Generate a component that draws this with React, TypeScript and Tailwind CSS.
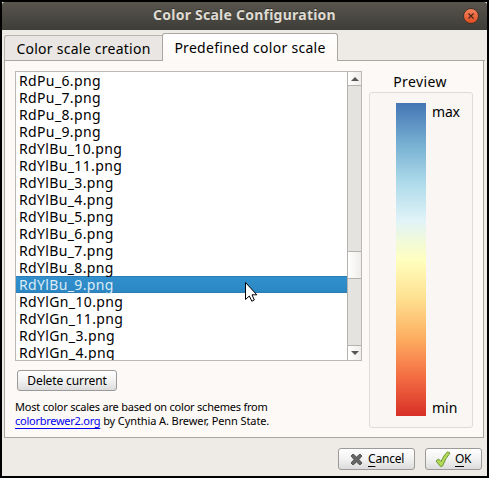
import type { ReactNode } from "react";

const files = [
  "RdPu_6.png", "RdPu_7.png", "RdPu_8.png", "RdPu_9.png", "RdYlBu_10.png", "RdYlBu_11.png",
  "RdYlBu_3.png", "RdYlBu_4.png", "RdYlBu_5.png", "RdYlBu_6.png", "RdYlBu_7.png", "RdYlBu_8.png",
  "RdYlBu_9.png", "RdYlGn_10.png", "RdYlGn_11.png", "RdYlGn_3.png", "RdYlGn_4.png",
];
const selected = "RdYlBu_9.png";

function TitleBar() {
  return (
    <header className="flex h-7 shrink-0 items-center rounded-t-[3px] bg-linear-to-b from-[#58554d] to-[#3e3d38] pr-2 pl-6">
      <h1 className="-mt-0.5 flex-1 text-center text-[14px] leading-5 font-bold tracking-[0.24px] whitespace-nowrap text-[#dfdbd2] [text-shadow:0_-1px_#33322e]">
        Color Scale Configuration
      </h1>
      <button aria-label="Close" className="flex size-4 items-center justify-center rounded-full border border-[#45352b] bg-linear-to-b from-[#f5835d] to-[#df4c1d]">
        <svg width="6" height="6" viewBox="0 0 6 6" stroke="#49271a" strokeWidth="1.2">
          <path d="M.5 .5 5.5 5.5M5.5 .5 .5 5.5" />
        </svg>
      </button>
    </header>
  );
}

function FileList() {
  return (
    <div className="flex h-[290px] w-[347px] overflow-hidden border border-[#bcb9b5] bg-white">
      <ul className="min-w-0 flex-1">
        {files.map((f) => (
          <li
            key={f}
            className={
              "h-[17px] pl-[3px] text-[14px] tracking-[0.36px] " +
              (f === selected
                ? "border-y border-[#2c7db4] bg-linear-to-b from-[#318fcd] to-[#2b88c4] leading-[15px] text-[#dcebf5]"
                : "leading-[17px] text-black")
            }
          >
            {f}
          </li>
        ))}
      </ul>
      <div className="flex w-[14px] flex-col border-l border-[#b5b2ae] bg-[#e4e3df]">
        <div className="flex h-[14px] items-center justify-center border-b border-[#b5b2ae] bg-linear-to-r from-white to-[#eeedea]">
          <svg width="8" height="4" viewBox="0 0 8 4"><path d="M4 0 8 4H0Z" fill="#555" /></svg>
        </div>
        <div className="mt-[165px] h-7 border-y border-[#b5b2ae] bg-linear-to-r from-white to-[#eeedea]" />
        <div className="mt-auto flex h-[15px] items-center justify-center border-t border-[#b5b2ae] bg-linear-to-r from-white to-[#eeedea]">
          <svg width="8" height="4" viewBox="0 0 8 4"><path d="M0 0H8L4 4Z" fill="#555" /></svg>
        </div>
      </div>
    </div>
  );
}

function Preview() {
  return (
    <section className="flex w-[104px] flex-col">
      <h2 className="flex h-[21px] items-center justify-center pr-[2px] text-[14px] tracking-[0.4px]">Preview</h2>
      <div className="flex h-[336px] gap-[6px] rounded-[3px] border border-[#dfdbd8] bg-[#f9f6f4] py-[10px] pl-[26px]">
        <div className="h-[313px] w-[30px] bg-[linear-gradient(to_bottom,#4575b4_0%,#74add1_12.5%,#abd9e9_25%,#e0f3f8_37.5%,#ffffbf_50%,#fee090_62.5%,#fdae61_75%,#f46d43_87.5%,#d73027_100%)]" />
        <div className="flex h-[314px] flex-col justify-between text-[14px] leading-[18px]">
          <span className="tracking-[-0.2px]">max</span>
          <span>min</span>
        </div>
      </div>
    </section>
  );
}

function Button({ className, children }: { className: string; children: ReactNode }) {
  return (
    <button className={"flex items-center rounded-[3px] border border-[#9c9a98] bg-linear-to-b from-white via-[#f2f2f2] to-[#dcdcdc] text-[12px] leading-4 tracking-[-0.12px] whitespace-nowrap " + className}>
      {children}
    </button>
  );
}

export default function App() {
  return (
    <div className="relative h-[478px] w-[489px] bg-black p-[2px] pb-0 font-['Noto_Sans',sans-serif] text-black">
      <div className="flex h-[474px] w-[485px] flex-col bg-[#eeebe7]">
        <TitleBar />
        <main className="px-[2px] pt-[3px]">
          <div className="flex h-[28px] items-end">
            <div className="mb-px flex h-[25px] w-[158px] items-center justify-center rounded-tl-[3px] border border-r-0 border-b-0 border-[#b7b3af] bg-[#e9e6e3] text-[14px] tracking-[0.26px] whitespace-nowrap">
              Color scale creation
            </div>
            <div className="flex h-[28px] w-[176px] items-center justify-center rounded-t-[3px] border border-b-0 border-[#aaa6a2] bg-linear-to-b from-white to-[#fdf9f6] text-[14px] tracking-[0.28px] whitespace-nowrap">
              Predefined color scale
            </div>
            <div className="h-px flex-1 bg-[#aaa6a2]" />
          </div>
          <div className="-mt-px flex">
            <div className="h-px w-[158px] bg-[#aaa6a2]" />
          </div>
          <div className="flex h-[377px] w-[480px] justify-between border border-t-0 border-[#aaa6a2] bg-[#fdf9f6] pt-[10px] pr-[10px] pl-[10px]">
            <div className="flex flex-col items-start">
              <FileList />
              <Button className="mt-[9px] ml-[2px] h-[21px] w-[100px] justify-center">Delete current</Button>
              <p className="mt-[9px] text-[11px] leading-[14px] tracking-[-0.22px] whitespace-nowrap">
                Most color scales are based on color schemes from
                <br />
                <a className="tracking-[-0.26px] text-[#0000ee] underline underline-offset-3">colorbrewer2.org</a>
                <span className="tracking-[-0.1px]"> by Cynthia A. Brewer, Penn State.</span>
              </p>
            </div>
            <Preview />
          </div>
        </main>
        <footer className="flex justify-end gap-[10px] pt-[10px] pr-[5px]">
          <Button className="h-[22px] w-[77px] gap-[5px] pl-[11px]">
            <svg width="13" height="13" viewBox="0 0 13 13">
              <path d="M3 1 6.5 4 10 1 12 3 9 6.5 12 10 10 12 6.5 9 3 12 1 10 4 6.5 1 3Z" fill="#666" stroke="#444" strokeWidth=".8" strokeLinejoin="round" />
            </svg>
            <span className="tracking-[-0.2px]"><u className="underline-offset-3">C</u>ancel</span>
          </Button>
          <Button className="h-[22px] w-[57px] gap-[4px] pl-[9px]">
            <svg width="16" height="16" viewBox="0 0 16 16">
              <path d="M1 10 3.5 8 6 10.5Q8.5 4.5 12.5 .8L15 2Q10.5 7 7.5 15L5.5 15.5Z" fill="#b3da57" stroke="#6c9632" strokeLinejoin="round" />
            </svg>
            <span className="tracking-[-0.4px]"><u className="underline-offset-3">O</u>K</span>
          </Button>
        </footer>
      </div>
      <svg className="absolute top-[281px] left-[244px]" width="14" height="22" viewBox="0 0 14 22">
        <path d="M1.5 1.5V18.5L5.3 15 7.8 20.2 10.3 19 8 13.8H12.8Z" fill="white" stroke="black" strokeLinejoin="round" />
      </svg>
    </div>
  );
}
